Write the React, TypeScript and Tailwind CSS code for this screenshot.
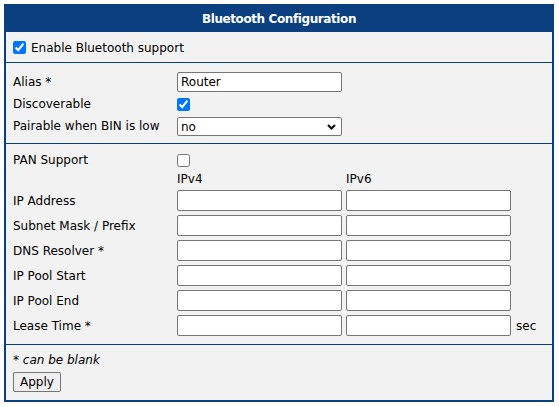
import React from 'react';

const FONT = { fontFamily: '"DejaVu Sans", Verdana, sans-serif' };

function TextInput({ value = '' }: { value?: string }) {
  return (
    <input
      type="text"
      defaultValue={value}
      className="h-[21px] w-[165px] rounded-[2px] border border-[#767676] bg-white px-[3px] text-[12px] text-black outline-none"
    />
  );
}

const ipRows = [
  { label: 'IP Address' },
  { label: 'Subnet Mask / Prefix' },
  { label: 'DNS Resolver *' },
  { label: 'IP Pool Start' },
  { label: 'IP Pool End' },
  { label: 'Lease Time *', suffix: 'sec' },
];

export default function App() {
  return (
    <div className="min-h-[407px] bg-white p-[4px] text-[12px] text-black" style={FONT}>
      <div className="w-[550px] border-2 border-[#0a4080] bg-[#f2f2f2]">
        {/* Header */}
        <div className="flex h-[26px] items-center justify-center bg-[#0a4080] text-[12px] font-bold tracking-[-0.4px] text-white">
          Bluetooth Configuration
        </div>

        {/* Enable */}
        <div className="flex h-[31px] items-center border-b border-[#0a4080] pl-[7px] pt-[1px]">
          <input type="checkbox" defaultChecked className="m-0 h-[13px] w-[13px]" />
          <span className="ml-[5px]">Enable Bluetooth support</span>
        </div>

        {/* General */}
        <div className="border-b border-[#0a4080] pb-[6px] pl-[7px] pt-[8px]">
          <div className="flex h-[22px] items-center">
            <span className="w-[164px]">Alias *</span>
            <input
              type="text"
              defaultValue="Router"
              className="h-[20px] w-[165px] rounded-[2px] border border-[#767676] bg-white px-[3px] text-[12px] text-black outline-none"
            />
          </div>
          <div className="flex h-[22px] items-center">
            <span className="w-[164px]">Discoverable</span>
            <input type="checkbox" defaultChecked className="m-0 h-[13px] w-[13px]" />
          </div>
          <div className="flex h-[22px] items-center">
            <span className="w-[164px]">Pairable when BIN is low</span>
            <div className="relative">
              <select className="h-[19px] w-[165px] appearance-none rounded-[2px] border border-[#767676] bg-white pl-[3px] text-[12px] text-black outline-none">
                <option>no</option>
                <option>yes</option>
              </select>
              <svg
                className="pointer-events-none absolute right-[6px] top-[7px]"
                width="9"
                height="6"
                viewBox="0 0 9 6"
              >
                <polyline points="1,1 4.5,4.5 8,1" fill="none" stroke="#111" strokeWidth="2.2" />
              </svg>
            </div>
          </div>
        </div>

        {/* PAN */}
        <div className="border-b border-[#0a4080] pb-[8px] pl-[7px] pt-[5px]">
          <div className="flex h-[22px] items-center">
            <span className="w-[164px]">PAN Support</span>
            <input type="checkbox" className="m-0 h-[13px] w-[13px]" />
          </div>
          <div className="flex h-[15px] items-center">
            <span className="w-[164px]" />
            <span className="w-[169px]">IPv4</span>
            <span>IPv6</span>
          </div>
          <div className="mt-[4px] flex flex-col gap-[4px]">
            {ipRows.map((row) => (
              <div key={row.label} className="flex h-[21px] items-center">
                <span className="w-[164px]">{row.label}</span>
                <TextInput />
                <span className="w-[4px]" />
                <TextInput />
                {row.suffix && <span className="ml-[5px]">{row.suffix}</span>}
              </div>
            ))}
          </div>
        </div>

        {/* Footer */}
        <div className="pb-[8px] pl-[7px] pt-[8px]">
          <div className="h-[14px] leading-[14px] italic">* can be blank</div>
          <button
            type="button"
            className="mt-[5px] h-[20px] rounded-[2px] border border-[#767676] bg-[#efefef] px-[6px] text-[12px] text-black"
          >
            Apply
          </button>
        </div>
      </div>
    </div>
  );
}
